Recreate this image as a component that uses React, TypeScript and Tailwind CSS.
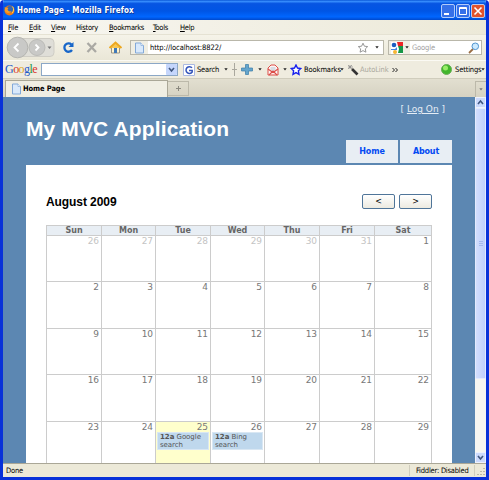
import type { ReactNode } from 'react';

const days = ['Sun', 'Mon', 'Tue', 'Wed', 'Thu', 'Fri', 'Sat'];

const weeks = [
  [26, 27, 28, 29, 30, 31, 1],
  [2, 3, 4, 5, 6, 7, 8],
  [9, 10, 11, 12, 13, 14, 15],
  [16, 17, 18, 19, 20, 21, 22],
  [23, 24, 25, 26, 27, 28, 29],
];

const events: Record<number, string> = { 25: 'Google', 26: 'Bing' };

const menus = [
  { label: 'File', key: 0, width: 'w-[21px]' },
  { label: 'Edit', key: 0, width: 'w-[22px]' },
  { label: 'View', key: 0, width: 'w-[25px]' },
  { label: 'History', key: 2, width: 'w-[33px]' },
  { label: 'Bookmarks', key: 0, width: 'w-[44px]' },
  { label: 'Tools', key: 0, width: 'w-[27px]' },
  { label: 'Help', key: 0, width: 'w-[24px]' },
];

function Caret({ color = '#222' }: { color?: string }) {
  return (
    <svg width="4" height="3" viewBox="0 0 4 3" className="shrink-0">
      <path d="M.3.3h3.4L2 2.5z" fill={color} />
    </svg>
  );
}

function PageIcon() {
  return (
    <svg width="11" height="12" viewBox="0 0 11 12" className="shrink-0">
      <path d="M1.5 1h5.5l2.5 2.5V11h-8z" fill="#d9e9fb" stroke="#83a9d8" />
      <path d="M7 1v2.5h2.5" fill="#fff" stroke="#83a9d8" strokeWidth=".7" />
    </svg>
  );
}

function Firefox() {
  return (
    <svg width="11" height="11" viewBox="0 0 11 11" className="shrink-0">
      <circle cx="5.5" cy="5.5" r="5" fill="#ef7a13" />
      <circle cx="6" cy="4.2" r="3.1" fill="#3567b4" />
      <path d="M.7 2C2 3 3.4 2.4 4.4 3.3L3.5 4.6c.7 1.8 2.4 2.2 4 1.5C6.4 8.6 2.6 8.7.9 6z" fill="#f79b24" />
      <path d="M8.6 1.5c1.5 2.2 1.2 5-.5 6.7" fill="none" stroke="#ffd34d" />
    </svg>
  );
}

function TitleBar() {
  return (
    <div className="flex h-5 shrink-0 items-center bg-[linear-gradient(#004bd0,#3a91ff_6%,#0755e2_18%,#0055e5_55%,#0066ff_84%,#0048cc)] pr-px pl-px text-white">
      <Firefox />
      <span className="ml-[2px] whitespace-nowrap pt-[2px] text-[8px] font-bold tracking-[0.13px] [text-shadow:1px_1px_0_#123b96]">
        Home Page - Mozilla Firefox
      </span>
      <div className="ml-auto flex gap-px pt-[2px]">
        {['min', 'max', 'close'].map((kind) => (
          <svg key={kind} width="14" height="14" viewBox="0 0 14 14">
            <rect x=".5" y=".5" width="13" height="13" rx="1.5" fill={kind === 'close' ? '#e1532d' : '#3570e8'} stroke="#d8e6ff" strokeWidth=".8" />
            {kind === 'min' && <path d="M3 10h5" stroke="#fff" strokeWidth="2" />}
            {kind === 'max' && <path d="M3.5 3.5h7v7h-7zM3 4.5h8" fill="none" stroke="#fff" />}
            {kind === 'close' && <path d="m3.5 3.5 7 7m0-7-7 7" stroke="#fff" strokeWidth="1.6" />}
          </svg>
        ))}
      </div>
    </div>
  );
}

function MenuBar() {
  return (
    <div className="flex h-[14px] shrink-0 items-center bg-[linear-gradient(90deg,#f8f7f2,#ece9d8)] pt-px pl-[5px]">
      {menus.map(({ label, key, width }) => (
        <span key={label} className={`${width} shrink-0 whitespace-nowrap tracking-[-0.3px]`}>
          {label.slice(0, key)}
          <u>{label[key]}</u>
          {label.slice(key + 1)}
        </span>
      ))}
    </div>
  );
}

function NavBar() {
  return (
    <div className="flex h-[26px] shrink-0 items-center border-t border-[#e5e2d3] bg-[linear-gradient(#f5f3e9,#eae7d7)]">
      <svg width="127" height="24" viewBox="0 0 127 24" className="shrink-0">
        <rect x="8" y="2.5" width="43" height="18" rx="4" fill="#dfded8" stroke="#cfcdc5" />
        <circle cx="34" cy="11.5" r="8" fill="#c9c9c7" stroke="#bbbbb7" />
        <circle cx="14.5" cy="11.5" r="10.3" fill="#c9c9c7" stroke="#b4b4b0" />
        <path d="m15.5 7.5-4 4 4 4M32.5 8.5l3 3-3 3" fill="none" stroke="#fff" strokeWidth="1.8" />
        <path d="M44.5 10.5h4l-2 2.5z" fill="#777" />
        <path d="M68.5 8.5A4.2 4.2 0 1 0 69 14" fill="none" stroke="#1766c9" strokeWidth="2.3" />
        <path d="M70.5 6v5h-5z" fill="#1766c9" />
        <path d="m84.5 7 8.5 9m0-9-8.5 9" stroke="#aaa9a4" strokeWidth="2.3" />
        <path d="M108.5 11v6h8v-6" fill="#fff4cf" stroke="#9b9588" />
        <path d="m106.5 12 6-5.5 6 5.5" fill="#f7c653" stroke="#eda820" strokeWidth="2" />
        <path d="M111 12h3v5h-3z" fill="#4079b8" />
      </svg>
      <div className="flex h-[15px] w-[254px] shrink-0 items-center border border-[#b9b7aa] bg-white">
        <div className="flex h-full w-[17px] items-center bg-[#f0eee3] pl-[3px]"><PageIcon /></div>
        <span className="ml-[2px] whitespace-nowrap tracking-[-0.07px]">http://localhost:8822/</span>
        <svg width="12" height="12" viewBox="0 0 12 12" className="mr-[6px] ml-auto">
          <path d="m6 1.2 1.4 3 3.3.4-2.4 2.3.6 3.3L6 8.6l-2.9 1.6.6-3.3-2.4-2.3 3.3-.4z" fill="#fff" stroke="#8c8c8c" strokeWidth=".9" />
        </svg>
        <div className="mr-[4px] flex"><Caret /></div>
      </div>
      <div className="ml-[4px] flex h-[15px] w-[94px] shrink-0 items-center border border-[#b9b7aa] bg-white">
        <div className="flex h-full w-[21px] shrink-0 items-center gap-[2px] bg-[#f0eee3] pl-[2px]">
          <svg width="12" height="12" viewBox="0 0 12 12" className="shrink-0">
            <path d="M0 0h12v12H0z" fill="#fff" />
            <path d="M6 0h6v4H7z" fill="#ed2424" />
            <path d="M7 4h5v7H7l1-4z" fill="#159646" />
            <circle cx="3" cy="3" r="2.3" fill="#1c5ec0" />
            <path d="M0 7h4l2-2v3H0z" fill="#4385df" />
            <circle cx="4" cy="10" r="2" fill="#f6b632" />
          </svg>
          <Caret />
        </div>
        <span className="ml-[2px] tracking-[-0.15px] text-[#a1a1a1]">Google</span>
        <svg width="12" height="12" viewBox="0 0 12 12" className="mr-px ml-auto">
          <path d="m5 7-4 4" stroke="#9a6d43" strokeWidth="1.8" />
          <circle cx="7.3" cy="4.3" r="3.3" fill="#cceaff" stroke="#5194ce" />
        </svg>
      </div>
    </div>
  );
}

function GoogleBar() {
  return (
    <div className="flex h-[18px] shrink-0 items-center border-t border-[#fbfaf4] bg-[#efecdf] pl-[2px]">
      <span className="w-[36px] shrink-0 pb-[2px] text-[12px] tracking-[-0.55px] text-[#2459c9] [font-family:'Liberation_Serif',serif]">
        G<span className="text-[#d9362b]">o</span><span className="text-[#dba520]">o</span>g<span className="text-[#239447]">l</span><span className="text-[#d9362b]">e</span>
      </span>
      <div className="flex h-[13px] w-[137px] shrink-0 justify-end border border-[#8ba7c6] bg-white">
        <svg width="11" height="11" viewBox="0 0 11 11">
          <rect width="11" height="11" rx="1" fill="#c5d6fc" />
          <path d="m3 4 2.5 3L8 4" fill="none" stroke="#40577f" strokeWidth="1.6" />
        </svg>
      </div>
      <svg width="12" height="12" viewBox="0 0 12 12" className="ml-[5px] shrink-0">
        <path d="M.5.5h11v11H.5z" fill="#fff" stroke="#aab9e2" />
        <path d="M9 3.8A3.4 3.4 0 1 0 9.2 8V6.5H6" fill="none" stroke="#3455bb" strokeWidth="1.5" />
      </svg>
      <span className="ml-[2px] w-[27px] shrink-0 tracking-[-0.2px]">Search</span>
      <Caret />
      <svg width="22" height="13" viewBox="0 0 22 13" className="ml-1 shrink-0">
        <path d="M2.5 0v13M0 6.5h5" stroke="#aaa89e" />
        <path d="M13.5 1.5h3v3.5h4v3h-4v3.5h-3V8h-4V5h4z" fill="#64a5cc" stroke="#397ca8" strokeWidth=".7" />
      </svg>
      <Caret color="transparent" />
      <Caret />
      <svg width="12" height="12" viewBox="0 0 12 12" className="mr-[4px] ml-[5px] shrink-0">
        <path d="M1 11V4l3-3h4l3 3v7z" fill="#fff4f2" stroke="#dc4e49" />
        <path d="M3.5 3h5v3L6 7.5 3.5 6z" fill="#d8dce4" />
        <path d="m1 5 5 3.5L11 5M2 11l4-4 4 4" fill="none" stroke="#dc4e49" strokeWidth="1.1" />
      </svg>
      <Caret />
      <svg width="12" height="12" viewBox="0 0 12 12" className="ml-[3px] shrink-0">
        <path d="m6 1 1.5 3 3.3.5-2.4 2.3.6 3.5-3-1.7-3 1.7.6-3.5-2.4-2.3L4.5 4z" fill="#fff" stroke="#1720ee" strokeWidth="1.4" />
      </svg>
      <span className="ml-[2px] w-[36px] shrink-0 tracking-[-0.1px]">Bookmarks</span>
      <Caret />
      <svg width="12" height="12" viewBox="0 0 12 12" className="ml-[3px] shrink-0">
        <path d="m5 5 5.5 5.5" stroke="#333" strokeWidth="2.7" />
        <path d="M3 1v4M1 3h5M1 1l4 4m0-4L1 5" stroke="#888" strokeWidth=".7" />
      </svg>
      <span className="ml-px w-[32px] shrink-0 tracking-[-0.12px] text-[#aaa89e]">AutoLink</span>
      <svg width="6" height="6" viewBox="0 0 6 6" className="shrink-0">
        <path d="m.5 1 2 2-2 2m3-4 2 2-2 2" fill="none" stroke="#222" />
      </svg>
      <svg width="11" height="11" viewBox="0 0 11 11" className="ml-auto shrink-0">
        <circle cx="5.5" cy="5.5" r="5" fill="#42b62c" stroke="#69ae57" />
        <circle cx="4.5" cy="4" r="2.5" fill="#98ed68" />
      </svg>
      <span className="ml-[3px] w-[26px] shrink-0 tracking-[-0.15px]">Settings</span>
      <div className="mr-px flex"><Caret /></div>
    </div>
  );
}

function TabBar() {
  return (
    <div className="flex h-[19px] shrink-0 items-end border-t border-[#d0cdbd] bg-[linear-gradient(#e2dfd0,#d6d2c2)] pl-[2px]">
      <div className="flex h-[17px] w-[163px] items-center border border-b-0 border-[#aaa797] bg-[#f0eee3] pl-[5px]">
        <PageIcon />
        <span className="ml-px whitespace-nowrap font-bold tracking-[-0.1px]">Home Page</span>
      </div>
      <div className="mb-px flex h-[15px] w-[21px] items-center justify-center border border-l-0 border-[#bcb9aa]">
        <svg width="7" height="7" viewBox="0 0 7 7"><path d="M3.5 1v5M1 3.5h5" stroke="#8b897f" /></svg>
      </div>
      <div className="ml-auto flex h-[16px] w-[11px] items-center justify-center border-t border-l border-[#bcb9aa]"><Caret color="#777" /></div>
    </div>
  );
}

function NavLink({ children }: { children: ReactNode }) {
  return <a className="flex h-[23px] w-[52px] items-center justify-center bg-[#e8eef4] text-[8px] font-bold tracking-[-0.15px] text-[#034af3]">{children}</a>;
}

function Calendar() {
  return (
    <div className="mt-[16px] w-[386px] border-t border-l border-[#ccc] text-[#777]">
      <div className="grid h-[10px] grid-cols-[55px_54px_55px_54px_55px_55px_57px] bg-[#e8eef4]">
        {days.map((day) => (
          <div key={day} className="flex items-center justify-center border-r border-b border-[#ccc] text-[8px] leading-none font-bold text-[#666]">{day}</div>
        ))}
      </div>
      {weeks.map((week, row) => (
        <div key={row} className="grid h-[46.4px] grid-cols-[55px_54px_55px_54px_55px_55px_57px]">
          {week.map((date) => {
            const event = row === 4 ? events[date] : undefined;
            return (
              <div key={date} className={`border-r border-b border-[#ccc] text-right text-[9px] leading-[10px] tracking-[-0.1px] ${row === 0 && date > 20 ? 'text-[#c4c4c4]' : ''} ${row === 4 && date === 25 ? 'bg-[#ffffcc]' : ''}`}>
                <div className="pr-[2px]">{date}</div>
                {event && (
                  <div className="mx-px h-[18px] border border-[#d9e7f3] bg-[#bfd8ed] pl-[2px] text-left text-[7px] leading-[8px] tracking-[-0.05px] text-[#555]">
                    <b>12a</b> {event}<br />search
                  </div>
                )}
              </div>
            );
          })}
        </div>
      ))}
    </div>
  );
}

function Page() {
  return (
    <div className="h-full w-[472px] overflow-hidden bg-[#5c87b2] pt-[7px] pl-[23px] [font-family:'DejaVu_Sans',sans-serif]">
      <div className="h-[11px] w-[419px] text-right text-[9px] leading-[11px] text-[#e5edf5]">[ <u>Log On</u> ]</div>
      <div className="flex h-[50px] w-[426px] justify-between">
        <h1 className="whitespace-nowrap text-[21px] leading-[27px] font-bold tracking-[0.12px] text-white [font-family:'Liberation_Sans',sans-serif]">My MVC Application</h1>
        <div className="mt-[25px] flex gap-[2px]">
          <NavLink>Home</NavLink>
          <NavLink>About</NavLink>
        </div>
      </div>
      <div className="h-[310px] w-[426px] bg-white px-5 pt-[29px]">
        <div className="flex h-[15px] w-[386px] items-center">
          <h2 className="text-[12px] font-bold tracking-[-0.08px] text-black [font-family:'Liberation_Sans',sans-serif]">August 2009</h2>
          <div className="ml-auto flex gap-[4px]">
            {['<', '>'].map((sign) => (
              <button key={sign} className="flex h-[15px] w-[33px] items-center justify-center rounded-[2px] border border-[#4f7599] bg-[linear-gradient(#fff,#eceae0)] text-[8px] text-black">{sign}</button>
            ))}
          </div>
        </div>
        <Calendar />
      </div>
    </div>
  );
}

function ScrollBar() {
  return (
    <div className="flex w-[11px] flex-col bg-[#f7f6f1]">
      <svg width="11" height="11" viewBox="0 0 11 11"><rect x=".5" y=".5" width="10" height="10" rx="1" fill="#cbd9fc" stroke="#eef2fe" /><path d="m3 7 2.5-3L8 7" fill="none" stroke="#40577f" strokeWidth="1.6" /></svg>
      <div className="flex h-[271px] flex-col items-center justify-center gap-px rounded-[1px] border border-[#e4ebfe] bg-[linear-gradient(90deg,#d3defd,#bfd0fc)]">
        <div className="h-px w-[4px] bg-[#a5b9ee]" />
        <div className="h-px w-[4px] bg-[#a5b9ee]" />
        <div className="h-px w-[4px] bg-[#a5b9ee]" />
      </div>
      <svg width="11" height="11" viewBox="0 0 11 11" className="mt-auto"><rect x=".5" y=".5" width="10" height="10" rx="1" fill="#cbd9fc" stroke="#eef2fe" /><path d="m3 4 2.5 3L8 4" fill="none" stroke="#40577f" strokeWidth="1.6" /></svg>
    </div>
  );
}

export default function App() {
  return (
    <div className="flex h-[480px] w-[489px] flex-col overflow-hidden rounded-t-[4px] border-x-[3px] border-b-[3px] border-[#0831d9] bg-[#ece9d8] text-[7.5px] text-black [font-family:'DejaVu_Sans_Condensed','DejaVu_Sans',sans-serif]">
      <TitleBar />
      <MenuBar />
      <NavBar />
      <GoogleBar />
      <TabBar />
      <div className="flex h-[366px] shrink-0"><Page /><ScrollBar /></div>
      <div className="flex h-[14px] shrink-0 items-center border-t border-[#aaa797] bg-[#ece9d8] pl-[3px]">
        <span className="tracking-[-0.2px]">Done</span>
        <span className="ml-auto w-[66px] border-x border-[#d0cdbd] pl-[6px] tracking-[-0.22px] whitespace-nowrap">Fiddler: Disabled</span>
        <svg width="10" height="10" viewBox="0 0 10 10" className="ml-px"><path d="M8 2v1M8 5v1M5 5v1M8 8v1M5 8v1M2 8v1" stroke="#aaa797" strokeWidth="1.5" /></svg>
      </div>
    </div>
  );
}
